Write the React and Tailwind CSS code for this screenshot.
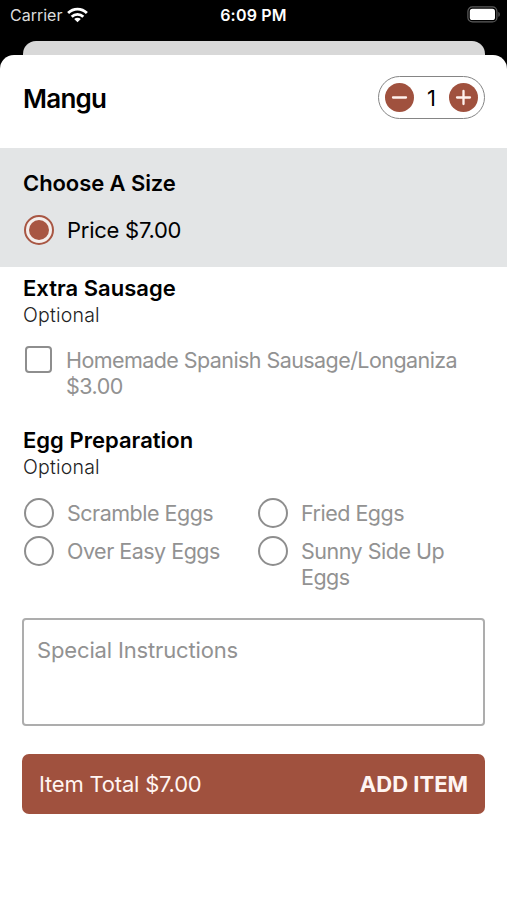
import { useState } from 'react';

const eggOptions = ['Scramble Eggs', 'Fried Eggs', 'Over Easy Eggs', 'Sunny Side Up Eggs'];

function WifiIcon() {
  return (
    <svg width="21" height="16" viewBox="0 0 21 16" fill="none" stroke="white" strokeWidth="2.8">
      <path d="M1.1 6.1C6.4 0.9 14.6 0.9 19.9 6.1" />
      <path d="M4.7 9.7C8 6.5 13 6.5 16.3 9.7" />
      <path d="M10.5 15.2L7.2 12C9.1 10.2 11.9 10.2 13.8 12Z" fill="white" stroke="none" />
    </svg>
  );
}

function BatteryIcon() {
  return (
    <svg width="34" height="17" viewBox="0 0 34 17" fill="none">
      <rect x="0.9" y="0.9" width="29" height="15" rx="4.5" stroke="#5c5c5c" strokeWidth="1.2" />
      <rect x="2.8" y="2.8" width="25.2" height="11.2" rx="2.6" fill="white" />
      <path d="M31.4 6C33.2 6.6 33.2 10.2 31.4 10.8Z" fill="#5c5c5c" />
    </svg>
  );
}

function StatusBar() {
  return (
    <div className="grid h-[41px] shrink-0 grid-cols-3 items-start pt-[5px] pr-[6px] pl-[10px] text-[16px] leading-5 text-white">
      <div className="flex items-center gap-[5px]">
        <span className="text-[#dcdcdc]">Carrier</span>
        <WifiIcon />
      </div>
      <span className="pr-1 text-center font-semibold tracking-[0.2px]">6:09 PM</span>
      <div className="flex justify-end pt-px">
        <BatteryIcon />
      </div>
    </div>
  );
}

function StepButton({ label, onClick, children }) {
  return (
    <button aria-label={label} onClick={onClick} className="size-[29px] rounded-full bg-[#a0513e]">
      <svg viewBox="0 0 30 30" stroke="#fff1ed" strokeWidth="2.4" strokeLinecap="round">
        {children}
      </svg>
    </button>
  );
}

function SectionTitle({ title }) {
  return (
    <div className="leading-[26px]">
      <h2 className="text-[22px] font-semibold tracking-[0.02px]">{title}</h2>
      <p className="pt-px text-[19.5px] font-light tracking-[0.2px] text-[#222]">Optional</p>
    </div>
  );
}

export default function App() {
  const [quantity, setQuantity] = useState(1);
  const [sausage, setSausage] = useState(false);
  const [egg, setEgg] = useState(null);

  const total = (7 + (sausage ? 3 : 0)) * quantity;

  return (
    <div className="flex h-[900px] w-[507px] flex-col bg-black font-['Inter',sans-serif] text-black">
      <StatusBar />
      <div className="mr-[22px] ml-[23px] h-[14px] shrink-0 rounded-t-[13px] bg-[#d8d8d8]" />

      <div className="flex-1 rounded-t-[14px] bg-white">
        <header className="flex h-[93px] items-center justify-between pr-[22px] pb-2 pl-[23px]">
          <h1 className="pt-[2px] text-[26px] font-semibold tracking-[-0.75px]">Mangu</h1>
          <div className="flex h-[43px] w-[107px] items-center justify-between rounded-full border border-[#858585] px-[6px]">
            <StepButton label="Remove one" onClick={() => setQuantity(Math.max(1, quantity - 1))}>
              <path d="M8.3 15H21.7" />
            </StepButton>
            <span className="pt-px text-[22px]">{quantity}</span>
            <StepButton label="Add one" onClick={() => setQuantity(quantity + 1)}>
              <path d="M8.3 15H21.7M15 8.3V21.7" />
            </StepButton>
          </div>
        </header>

        <section className="h-[119px] bg-[#e3e5e6] px-[23px] pt-[22px] text-[22px] leading-[26px]">
          <h2 className="font-semibold tracking-[-0.08px]">Choose A Size</h2>
          <div className="mt-[19px] flex items-center gap-[13px] pl-[1px]">
            <span className="flex size-[30px] items-center justify-center rounded-full border-2 border-[#a85643] bg-[#f4eeec]">
              <span className="size-5 rounded-full bg-[#a85643]" />
            </span>
            <span className="tracking-[-0.25px]">Price $7.00</span>
          </div>
        </section>

        <section className="px-[23px] pt-2">
          <SectionTitle title="Extra Sausage" />
          <button
            className="mt-[18px] flex items-start gap-[14px] pl-[2px] text-left text-[21.5px] leading-[26px] text-[#929292]"
            onClick={() => setSausage(!sausage)}
          >
            <span className={`size-[27px] shrink-0 rounded-[4px] border-2 border-[#8e8e8e] ${sausage ? 'bg-[#a0513e]' : ''}`} />
            <span className="pt-px">
              <span className="block tracking-[-0.57px]">Homemade Spanish Sausage/Longaniza</span>
              <span className="block tracking-[-0.5px]">$3.00</span>
            </span>
          </button>
        </section>

        <section className="px-[23px] pt-7">
          <SectionTitle title="Egg Preparation" />
          <div className="mt-[18px] grid grid-cols-[234px_200px] gap-y-2 pl-[1px] text-[21.5px] leading-[26px] text-[#929292]">
            {eggOptions.map(option => (
              <button key={option} className="flex items-start gap-[13px] text-left" onClick={() => setEgg(option)}>
                <span className="flex size-[30px] shrink-0 items-center justify-center rounded-full border-2 border-[#8e8e8e]">
                  {egg === option && <span className="size-5 rounded-full bg-[#a85643]" />}
                </span>
                <span className="pt-[2px] tracking-[-0.5px]">{option}</span>
              </button>
            ))}
          </div>
        </section>

        <div className="px-[22px] pt-7">
          <textarea
            className="block h-[108px] w-full resize-none rounded-[4px] border-2 border-[#adadad] px-[13px] py-[17px] text-[22px] leading-[26px] tracking-[-0.15px] placeholder:text-[#929292]"
            placeholder="Special Instructions"
          />
          <button className="mt-7 flex h-[60px] w-full items-center justify-between rounded-[7px] bg-[#a0513e] px-[17px] text-[22px] text-[#fff5f2]">
            <span className="tracking-[-0.2px]">Item Total ${total.toFixed(2)}</span>
            <span className="font-bold">ADD ITEM</span>
          </button>
        </div>
      </div>
    </div>
  );
}
